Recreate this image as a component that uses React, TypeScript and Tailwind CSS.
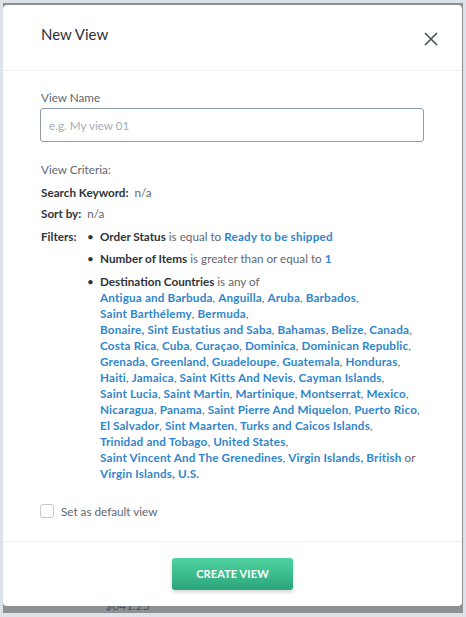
import React from "react";

const countryLines: string[][] = [
  ["Antigua and Barbuda", "Anguilla", "Aruba", "Barbados"],
  ["Saint Barthélemy", "Bermuda"],
  ["Bonaire, Sint Eustatius and Saba", "Bahamas", "Belize", "Canada"],
  ["Costa Rica", "Cuba", "Curaçao", "Dominica", "Dominican Republic"],
  ["Grenada", "Greenland", "Guadeloupe", "Guatemala", "Honduras"],
  ["Haiti", "Jamaica", "Saint Kitts And Nevis", "Cayman Islands"],
  ["Saint Lucia", "Saint Martin", "Martinique", "Montserrat", "Mexico"],
  ["Nicaragua", "Panama", "Saint Pierre And Miquelon", "Puerto Rico"],
  ["El Salvador", "Sint Maarten", "Turks and Caicos Islands"],
  ["Trinidad and Tobago", "United States"],
];

function Link({ children }: { children: React.ReactNode }) {
  return <span className="font-bold text-[#2f86cc] tracking-[0.18px]">{children}</span>;
}

function CountryLine({ names }: { names: string[] }) {
  return (
    <div className="whitespace-nowrap">
      {names.map((n, i) => (
        <span key={n}>
          {i > 0 && " "}
          <Link>{n}</Link>,
        </span>
      ))}
    </div>
  );
}

function FilterItem({ children, className = "" }: { children: React.ReactNode; className?: string }) {
  return (
    <li className={"flex " + className}>
      <span className="w-[13px] shrink-0 text-[#2d3339]">•</span>
      <div>{children}</div>
    </li>
  );
}

export default function App() {
  return (
    <div
      className="w-[466px] h-[617px] bg-[#dde2e8] px-[3px] pt-[3px] pb-[4px] text-[11.7px] leading-[16px] text-[#5f6670]"
      style={{ fontFamily: "Lato, 'Noto Sans', sans-serif" }}
    >
      <div className="h-full bg-[#8e9193] pt-[2px] flex flex-col">
        <div className="w-[459px] h-[601px] bg-white rounded-[4px] flex flex-col shrink-0">
          {/* header */}
          <div className="h-[65px] flex items-center justify-between pl-[38px] pr-[24px] pt-[2px]">
            <h2 className="text-[15px] text-[#2d3339] -mt-[9px]">New View</h2>
            <svg width="14" height="14" viewBox="0 0 14 14">
              <path d="M1 1 L13 13 M13 1 L1 13" stroke="#4a5058" strokeWidth="1.6" />
            </svg>
          </div>
          <div className="h-px bg-[#eceff2]" />

          {/* body */}
          <div className="h-[470px] pl-[37px] pt-[18px] flex flex-col">
            <div className="pl-px">View Name</div>
            <input
              className="mt-[3px] w-[384px] h-[34px] border border-[#8d9ba8] rounded-[3px] px-[8px] text-[11.7px] outline-none placeholder:text-[#a3adb8]"
              placeholder="e.g. My view 01"
            />
            <div className="pl-px mt-[19px]">View Criteria:</div>
            <div className="pl-px mt-[7px]">
              <span className="font-bold text-[#2d3339]">Search Keyword:</span>&nbsp; n/a
            </div>
            <div className="pl-px mt-[5px]">
              <span className="font-bold text-[#2d3339]">Sort by:</span>&nbsp; n/a
            </div>
            <div className="pl-px mt-[7px] flex">
              <span className="font-bold text-[#2d3339] w-[46px] shrink-0">Filters:</span>
              <ul className="flex flex-col">
                <FilterItem>
                  <span className="font-bold text-[#2d3339]">Order Status</span> is equal to{" "}
                  <Link>Ready to be shipped</Link>
                </FilterItem>
                <FilterItem className="mt-[6px]">
                  <span className="font-bold text-[#2d3339]">Number of Items</span> is greater than or equal to{" "}
                  <Link>1</Link>
                </FilterItem>
                <FilterItem className="mt-[7px]">
                  <div>
                    <span className="font-bold text-[#2d3339]">Destination Countries</span> is any of
                  </div>
                  {countryLines.map((l, i) => (
                    <CountryLine key={i} names={l} />
                  ))}
                  <div className="whitespace-nowrap">
                    <Link>Saint Vincent And The Grenedines</Link>, <Link>Virgin Islands, British</Link> or
                  </div>
                  <div>
                    <Link>Virgin Islands, U.S.</Link>
                  </div>
                </FilterItem>
              </ul>
            </div>
            <label className="mt-[22px] flex items-center gap-[7px]">
              <span className="w-[14px] h-[14px] border border-[#c3c9d0] rounded-[3px] bg-white" />
              <span>Set as default view</span>
            </label>
          </div>
          <div className="h-px bg-[#eceff2]" />

          {/* footer */}
          <div className="h-[64px] flex items-center justify-center">
            <button className="w-[121px] h-[32px] rounded-[3px] bg-gradient-to-b from-[#4fd3a0] to-[#2ba57b] text-white font-bold text-[11px] tracking-[0.1px] shadow-[0_2px_4px_rgba(0,0,0,0.18)]">
              CREATE VIEW
            </button>
          </div>
        </div>
        <div className="h-[7px] overflow-hidden pl-[102px]">
          <div className="-mt-[7px] text-[12px] leading-[14px] text-[#4c5259]">$641.25</div>
        </div>
      </div>
    </div>
  );
}
